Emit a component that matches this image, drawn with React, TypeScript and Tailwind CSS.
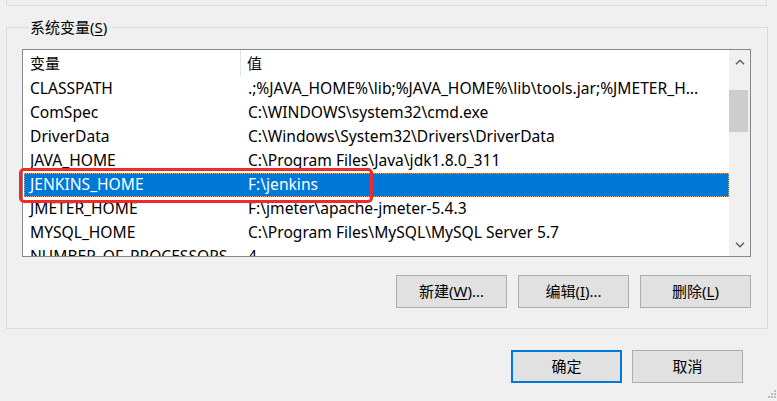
import React from "react";

type Row = { name: string; value: string };

const rows: Row[] = [
  { name: "CLASSPATH", value: ".;%JAVA_HOME%\\lib;%JAVA_HOME%\\lib\\tools.jar;%JMETER_H..." },
  { name: "ComSpec", value: "C:\\WINDOWS\\system32\\cmd.exe" },
  { name: "DriverData", value: "C:\\Windows\\System32\\Drivers\\DriverData" },
  { name: "JAVA_HOME", value: "C:\\Program Files\\Java\\jdk1.8.0_311" },
  { name: "JENKINS_HOME", value: "F:\\jenkins" },
  { name: "JMETER_HOME", value: "F:\\jmeter\\apache-jmeter-5.4.3" },
  { name: "MYSQL_HOME", value: "C:\\Program Files\\MySQL\\MySQL Server 5.7" },
  { name: "NUMBER_OF_PROCESSORS", value: "4" },
];

const SELECTED = "JENKINS_HOME";

function Chevron({ up }: { up?: boolean }) {
  return (
    <svg width="10" height="6" viewBox="0 0 10 6">
      <path
        d={up ? "M1 5.2 L5 1.2 L9 5.2" : "M1 0.8 L5 4.8 L9 0.8"}
        fill="none"
        stroke="#606060"
        strokeWidth="1.5"
      />
    </svg>
  );
}

function Btn({ children, primary }: { children: React.ReactNode; primary?: boolean }) {
  return (
    <button
      className={
        primary
          ? "w-[111px] h-[33px] bg-[#e1e1e1] border-2 border-[#0078d7] flex items-center justify-center text-[15px] text-black"
          : "w-[111px] h-[33px] bg-[#e1e1e1] border border-[#adadad] flex items-center justify-center text-[15px] text-black"
      }
    >
      {children}
    </button>
  );
}

export default function App() {
  return (
    <div className="relative w-[777px] h-[401px] overflow-hidden bg-[#f0f0f0] text-black font-['Noto_Sans','Noto_Sans_CJK_SC',sans-serif]">
      {/* bottom of the user variables group */}
      <div className="ml-[6px] w-[761px] h-[6px] border-x border-b border-[#dcdcdc]" />

      {/* system variables group */}
      <fieldset className="mt-[11px] ml-[6px] w-[762px] border border-[#dcdcdc] pl-[15px] pt-[12px] pb-[20px]">
        <legend className="ml-[7px] px-[1px] text-[15px] leading-[20px]">
          系统变量(<span className="underline underline-offset-2">S</span>)
        </legend>

        <div className="w-[729px] h-[208px] border border-[#828790] bg-white flex overflow-hidden">
          <div className="flex-1 flex flex-col overflow-hidden">
            {/* header */}
            <div className="h-[27px] flex shrink-0 items-center">
              <div className="w-[218px] h-full pl-[7px] flex items-center border-r border-[#e5e5e5] text-[15px]">
                变量
              </div>
              <div className="pl-[6px] text-[15px]">值</div>
            </div>
            {rows.map((r) => {
              const sel = r.name === SELECTED;
              return (
                <div
                  key={r.name}
                  className={
                    sel
                      ? "h-[24px] shrink-0 ml-[1px] flex items-center bg-[#0078d7] text-white text-[15.6px] outline-1 outline-dotted outline-[#f0a050] -outline-offset-1"
                      : "h-[24px] shrink-0 ml-[1px] flex items-center text-[15.6px]"
                  }
                >
                  <div className="w-[218px] pl-[6px] whitespace-nowrap overflow-hidden">{r.name}</div>
                  <div className="pl-[6px] whitespace-nowrap">{r.value}</div>
                </div>
              );
            })}
          </div>

          {/* scrollbar */}
          <div className="w-[21px] shrink-0 bg-[#f0f0f0] flex flex-col">
            <div className="h-[24px] flex items-center justify-center">
              <Chevron up />
            </div>
            <div className="flex-1">
              <div className="mt-[16px] w-[19px] h-[42px] bg-[#cdcdcd]" />
            </div>
            <div className="h-[23px] flex items-center justify-center">
              <Chevron />
            </div>
          </div>
        </div>

        <div className="mt-[18px] w-[729px] flex justify-end gap-[11px]">
          <Btn>
            新建(<span className="underline underline-offset-2">W</span>)...
          </Btn>
          <Btn>
            编辑(<span className="underline underline-offset-2">I</span>)...
          </Btn>
          <Btn>
            删除(<span className="underline underline-offset-2">L</span>)
          </Btn>
        </div>
      </fieldset>

      <div className="mt-[21px] pr-[34px] flex justify-end gap-[10px]">
        <Btn primary>确定</Btn>
        <Btn>取消</Btn>
      </div>

      {/* red annotation box */}
      <div className="absolute left-[19px] top-[168px] w-[354px] h-[35px] border-[3px] border-[#ee2a2a] rounded-[5px]" />

      {/* resize grip */}
      <svg className="absolute right-0 bottom-0" width="10" height="12" viewBox="0 0 10 12">
        <rect x="7" y="1" width="2" height="2" fill="#bcbcbc" />
        <rect x="4" y="4" width="2" height="2" fill="#bcbcbc" />
        <rect x="7" y="4" width="2" height="2" fill="#bcbcbc" />
        <rect x="1" y="7" width="2" height="2" fill="#bcbcbc" />
        <rect x="4" y="7" width="2" height="2" fill="#bcbcbc" />
        <rect x="7" y="7" width="2" height="2" fill="#bcbcbc" />
      </svg>
    </div>
  );
}
